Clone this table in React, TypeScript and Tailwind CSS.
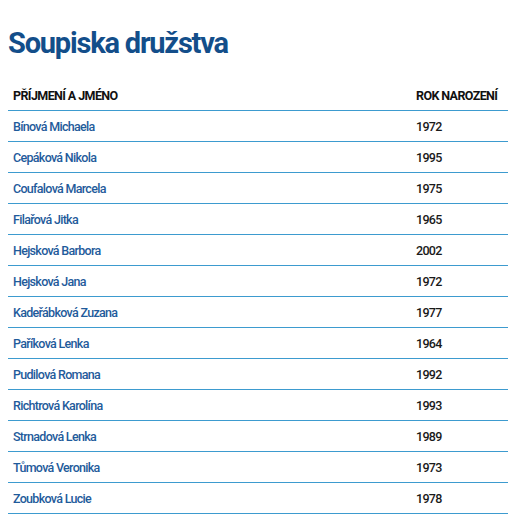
const players = [
  ['Bínová Michaela', '1972'],
  ['Cepáková Nikola', '1995'],
  ['Coufalová Marcela', '1975'],
  ['Filařová Jitka', '1965'],
  ['Hejsková Barbora', '2002'],
  ['Hejsková Jana', '1972'],
  ['Kadeřábková Zuzana', '1977'],
  ['Paříková Lenka', '1964'],
  ['Pudilová Romana', '1992'],
  ['Richtrová Karolína', '1993'],
  ['Strnadová Lenka', '1989'],
  ['Tůmová Veronika', '1973'],
  ['Zoubková Lucie', '1978'],
];

export default function App() {
  return (
    <div className="min-h-[527px] bg-white pl-2 pr-[2px] pt-[25px] font-['Roboto',sans-serif]">
      <h1 className="text-[29px] font-bold leading-[36px] tracking-[-1.2px] text-[#134e8a]">
        Soupiska družstva
      </h1>

      <div className="mt-[19px]">
        {/* header */}
        <div className="grid h-[31px] grid-cols-[403px_1fr] items-center border-b border-[#3d9bcf] pt-[3px] text-[12.5px] font-bold tracking-[-0.6px] whitespace-nowrap text-[#111]">
          <div className="px-[5px]">PŘÍJMENÍ A JMÉNO</div>
          <div className="px-[5px]">ROK NAROZENÍ</div>
        </div>

        {players.map(([name, year]) => (
          <div
            key={name}
            className="grid h-[31px] grid-cols-[403px_1fr] items-center border-b border-[#3d9bcf] pt-[3px] text-[12.5px] font-medium tracking-[-0.7px] whitespace-nowrap"
          >
            <div className="px-[5px] text-[#1f5b9b]">{name}</div>
            <div className="px-[5px] text-[#1a1a1a]">{year}</div>
          </div>
        ))}
      </div>
    </div>
  );
}
